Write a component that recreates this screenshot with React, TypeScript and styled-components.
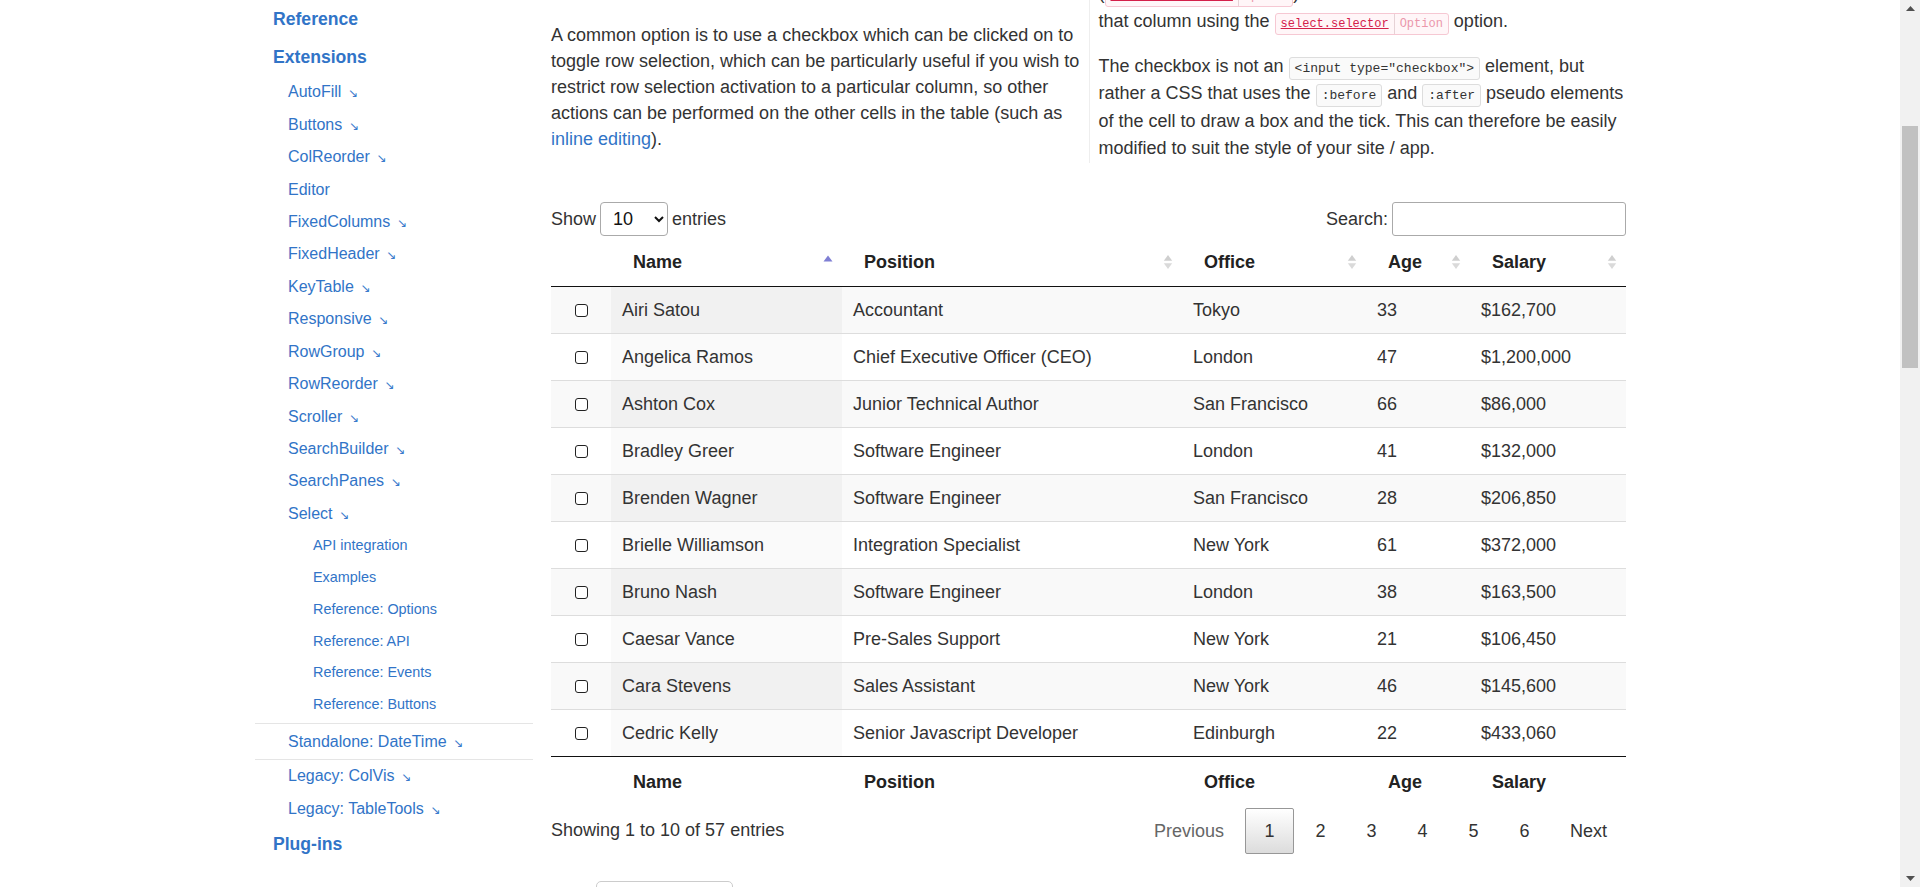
import React from "react";
import styled, { createGlobalStyle, css } from "styled-components";

interface NavItem {
    label: string;
    ext?: boolean;
    boxed?: boolean;
    children?: string[];
}

interface Employee {
    name: string;
    position: string;
    office: string;
    age: number;
    salary: string;
}

const extensions: NavItem[] = [
    { label: "AutoFill", ext: true },
    { label: "Buttons", ext: true },
    { label: "ColReorder", ext: true },
    { label: "Editor" },
    { label: "FixedColumns", ext: true },
    { label: "FixedHeader", ext: true },
    { label: "KeyTable", ext: true },
    { label: "Responsive", ext: true },
    { label: "RowGroup", ext: true },
    { label: "RowReorder", ext: true },
    { label: "Scroller", ext: true },
    { label: "SearchBuilder", ext: true },
    { label: "SearchPanes", ext: true },
    {
        label: "Select",
        ext: true,
        children: [
            "API integration",
            "Examples",
            "Reference: Options",
            "Reference: API",
            "Reference: Events",
            "Reference: Buttons",
        ],
    },
    { label: "Standalone: DateTime", ext: true, boxed: true },
    { label: "Legacy: ColVis", ext: true },
    { label: "Legacy: TableTools", ext: true },
];

const employees: Employee[] = [
    { name: "Airi Satou", position: "Accountant", office: "Tokyo", age: 33, salary: "$162,700" },
    { name: "Angelica Ramos", position: "Chief Executive Officer (CEO)", office: "London", age: 47, salary: "$1,200,000" },
    { name: "Ashton Cox", position: "Junior Technical Author", office: "San Francisco", age: 66, salary: "$86,000" },
    { name: "Bradley Greer", position: "Software Engineer", office: "London", age: 41, salary: "$132,000" },
    { name: "Brenden Wagner", position: "Software Engineer", office: "San Francisco", age: 28, salary: "$206,850" },
    { name: "Brielle Williamson", position: "Integration Specialist", office: "New York", age: 61, salary: "$372,000" },
    { name: "Bruno Nash", position: "Software Engineer", office: "London", age: 38, salary: "$163,500" },
    { name: "Caesar Vance", position: "Pre-Sales Support", office: "New York", age: 21, salary: "$106,450" },
    { name: "Cara Stevens", position: "Sales Assistant", office: "New York", age: 46, salary: "$145,600" },
    { name: "Cedric Kelly", position: "Senior Javascript Developer", office: "Edinburgh", age: 22, salary: "$433,060" },
];

const columns = [
    { label: "", width: 60, sort: null },
    { label: "Name", width: 231, sort: "asc" },
    { label: "Position", width: 340, sort: "both" },
    { label: "Office", width: 184, sort: "both" },
    { label: "Age", width: 104, sort: "both" },
    { label: "Salary", width: 156, sort: "both" },
] as const;

const GlobalStyle = createGlobalStyle`
    html, body {
        margin: 0;
        padding: 0;
        overflow: hidden;
        background: #fff;
    }
    body {
        font-family: "Liberation Sans", Arial, sans-serif;
        color: #333;
        padding-right: 20px;
    }
    * {
        box-sizing: border-box;
    }
`;

const Layout = styled.div`
    display: flex;
    gap: 18px;
    padding-left: 255px;
    margin-top: -20px;
`;

const Sidebar = styled.nav`
    width: 278px;
    flex: none;
    padding-top: 20.5px;
`;

const NavList = styled.ul`
    list-style: none;
    margin: 0;
    padding: 0;
`;

const SubList = styled(NavList)<{ $nested?: boolean }>`
    ${(p) => p.$nested && css`padding-bottom: 2px;`}
`;

const Heading = styled.a`
    display: block;
    padding: 6.7px 0 6.7px 18px;
    font-size: 17.6px;
    line-height: 24.6px;
    font-weight: bold;
    color: #3174c7;
    text-decoration: none;
`;

const SubLink = styled.a<{ $boxed?: boolean }>`
    display: block;
    padding: 5px 0 5px 33px;
    font-size: 16px;
    line-height: 22.4px;
    color: #3174c7;
    text-decoration: none;
    ${(p) =>
        p.$boxed &&
        css`
            border-top: 1px solid #e5e5e5;
            border-bottom: 1px solid #e5e5e5;
            padding-top: 7px;
            padding-bottom: 6px;
        `}
`;

const SubSubLink = styled.a`
    display: block;
    padding: 5px 0 5px 58px;
    font-size: 14.4px;
    line-height: 21.8px;
    color: #3174c7;
    text-decoration: none;
`;

const Arrow = styled.span`
    font-family: "DejaVu Sans", sans-serif;
    font-size: 12px;
    line-height: 0;
    margin-left: 7px;
    color: #3b7bcc;
`;

const Main = styled.main`
    width: 1075px;
    flex: none;
    font-size: 18px;
`;

const Info = styled.div`
    display: grid;
    grid-template-columns: 537.5px 1fr;
`;

const InfoCol = styled.div<{ $rule?: boolean }>`
    padding-right: 7px;
    line-height: 26px;
    ${(p) =>
        p.$rule &&
        css`
            padding: 0 0 0 9px;
            line-height: 27.5px;
            border-left: 1px solid #eee;
        `}
`;

const Para = styled.p<{ $offset?: number }>`
    margin: ${(p) => p.$offset ?? 0}px 0 17.6px;
    &:last-child {
        margin-bottom: 0;
    }
`;

const Link = styled.a`
    color: #3174c7;
    text-decoration: none;
`;

const Code = styled.code`
    font-family: "Liberation Mono", monospace;
    font-size: 13px;
    line-height: 1;
    padding: 3px 5px;
    border: 1px solid #ddd;
    border-radius: 3px;
    background: #fafafa;
    color: #333;
`;

const OptTag = styled.span`
    display: inline-block;
    font-family: "Liberation Mono", monospace;
    font-size: 12px;
    line-height: 16px;
    border: 1px solid #f6c8d3;
    border-radius: 3px;
    background: #fff6f8;
`;

const OptName = styled.span`
    display: inline-block;
    padding: 2px 5px;
    color: #d4204a;
    text-decoration: underline;
    border-right: 1px solid #e6d2d6;
`;

const OptKind = styled.span`
    display: inline-block;
    padding: 2px 5px;
    color: #eb96ab;
`;

const Controls = styled.div`
    display: flex;
    justify-content: space-between;
    align-items: center;
    margin-top: 39.5px;
    height: 34px;
`;

const ControlLabel = styled.label`
    display: flex;
    align-items: center;
    gap: 4px;
`;

const LengthSelect = styled.select`
    width: 68px;
    height: 34px;
    padding: 0 4px 0 8px;
    font-family: inherit;
    font-size: 18px;
    color: #111;
    background: #fff;
    border: 1px solid #aaa;
    border-radius: 4px;
`;

const SearchInput = styled.input`
    width: 234px;
    height: 34px;
    border: 1px solid #aaa;
    border-radius: 3px;
    font-size: 18px;
`;

const Table = styled.table`
    width: 100%;
    margin-top: 1px;
    table-layout: fixed;
    border-collapse: separate;
    border-spacing: 0;
    font-size: 18px;
`;

const HeadCell = styled.th<{ $foot?: boolean }>`
    padding: 15px 9px 14px 22px;
    line-height: 20px;
    text-align: left;
    font-weight: bold;
    color: #222;
    ${(p) =>
        p.$foot
            ? css`border-top: 1px solid #111;`
            : css`border-bottom: 1px solid #111;`}
`;

const HeadInner = styled.div`
    display: flex;
    align-items: center;
    justify-content: space-between;
`;

const Row = styled.tr<{ $odd: boolean }>`
    background: ${(p) => (p.$odd ? "#f9f9f9" : "#fff")};
    &:not(:first-child) td {
        border-top: 1px solid #ddd;
    }
`;

const Cell = styled.td<{ $sorted?: boolean; $odd?: boolean; $center?: boolean }>`
    padding: 13px 11px;
    line-height: 20px;
    white-space: nowrap;
    ${(p) => p.$center && css`text-align: center;`}
    ${(p) => p.$sorted && css`background: ${p.$odd ? "#f1f1f1" : "#fafafa"};`}
`;

const Check = styled.input`
    appearance: none;
    display: block;
    margin: 0 auto;
    width: 13px;
    height: 13px;
    border: 1px solid #222;
    border-radius: 3px;
    background: #fff;
`;

const Bottom = styled.div`
    display: flex;
    justify-content: space-between;
    align-items: center;
    margin-top: 1.5px;
`;

const Pager = styled.div`
    display: flex;
    gap: 2px;
`;

const PageButton = styled.a<{ $current?: boolean; $disabled?: boolean }>`
    display: block;
    min-width: 49px;
    padding: 9px 18px;
    line-height: 26px;
    text-align: center;
    font-size: 18px;
    color: ${(p) => (p.$disabled ? "#666" : "#333")};
    border: 1px solid transparent;
    border-radius: 2px;
    ${(p) =>
        p.$current &&
        css`
            border-color: #979797;
            background: linear-gradient(to bottom, #fff 0%, #dcdcdc 100%);
        `}
`;

const TabBar = styled.div`
    display: flex;
    margin-top: 27px;
    padding-left: 45px;
`;

const Tab = styled.div<{ $active?: boolean }>`
    width: 137px;
    height: 44px;
    line-height: 44px;
    text-align: center;
    border: 1px solid ${(p) => (p.$active ? "#ccc" : "transparent")};
    border-radius: 5px;
`;

const ScrollTrack = styled.div`
    position: fixed;
    top: 0;
    right: 0;
    width: 20px;
    height: 100vh;
    background: #f1f1f1;
`;

const ScrollThumb = styled.div`
    position: absolute;
    top: 126px;
    left: 2px;
    right: 2px;
    height: 242px;
    background: #c1c1c1;
`;

const ScrollButton = styled.div<{ $down?: boolean }>`
    position: absolute;
    left: 0;
    right: 0;
    height: 17px;
    display: flex;
    align-items: center;
    justify-content: center;
    ${(p) => (p.$down ? css`bottom: 0;` : css`top: 0;`)}
`;

const SortIcon = ({ kind }: { kind: "asc" | "both" }) => (
    <svg width="10" height="20" viewBox="0 0 10 20" aria-hidden>
        {kind === "asc" ? (
            <path d="M0.5 9.5 L5 3.5 L9.5 9.5 Z" fill="#7f7fd4" />
        ) : (
            <>
                <path d="M0.8 8.8 L5 3 L9.2 8.8 Z" fill="#cfcfcf" />
                <path d="M0.8 11.2 L5 17 L9.2 11.2 Z" fill="#dadada" />
            </>
        )}
    </svg>
);

const ScrollArrow = ({ down }: { down?: boolean }) => (
    <svg width="9" height="5" viewBox="0 0 9 5">
        <path d={down ? "M0 0 L9 0 L4.5 5 Z" : "M0 5 L9 5 L4.5 0 Z"} fill="#505050" />
    </svg>
);

const Opt = ({ name }: { name: string }) => (
    <OptTag>
        <OptName>{name}</OptName>
        <OptKind>Option</OptKind>
    </OptTag>
);

const Navigation = () => (
    <Sidebar>
        <NavList>
            <li>
                <Heading href="#">Reference</Heading>
            </li>
            <li>
                <Heading href="#">Extensions</Heading>
                <SubList>
                    {extensions.map((item) => (
                        <li key={item.label}>
                            <SubLink href="#" $boxed={item.boxed}>
                                {item.label}
                                {item.ext && <Arrow>↘</Arrow>}
                            </SubLink>
                            {item.children && (
                                <SubList $nested>
                                    {item.children.map((child) => (
                                        <li key={child}>
                                            <SubSubLink href="#">{child}</SubSubLink>
                                        </li>
                                    ))}
                                </SubList>
                            )}
                        </li>
                    ))}
                </SubList>
            </li>
            <li>
                <Heading href="#">Plug-ins</Heading>
            </li>
        </NavList>
    </Sidebar>
);

const HeadRow = ({ foot }: { foot?: boolean }) => (
    <tr>
        {columns.map((col, i) => (
            <HeadCell key={i} $foot={foot}>
                <HeadInner>
                    <span>{col.label}</span>
                    {!foot && col.sort && <SortIcon kind={col.sort} />}
                </HeadInner>
            </HeadCell>
        ))}
    </tr>
);

const App = () => {
    return (
        <>
            <GlobalStyle />
            <Layout>
                <Navigation />
                <Main>
                    <Info>
                        <InfoCol>
                            <Para $offset={42}>
                                A common option is to use a checkbox which can be clicked on to toggle row
                                selection, which can be particularly useful if you wish to restrict row
                                selection activation to a particular column, so other actions can be performed
                                on the other cells in the table (such as <Link href="#">inline editing</Link>).
                            </Para>
                        </InfoCol>
                        <InfoCol $rule>
                            <Para>
                                (<Opt name="columns.className" />) and row selection is restricted to
                                <br />
                                that column using the <Opt name="select.selector" /> option.
                            </Para>
                            <Para>
                                The checkbox is not an <Code>&lt;input type="checkbox"&gt;</Code> element, but
                                rather a CSS that uses the <Code>:before</Code> and <Code>:after</Code> pseudo
                                elements of the cell to draw a box and the tick. This can therefore be easily
                                modified to suit the style of your site / app.
                            </Para>
                        </InfoCol>
                    </Info>

                    <Controls>
                        <ControlLabel>
                            Show
                            <LengthSelect defaultValue="10">
                                <option value="10">10</option>
                                <option value="25">25</option>
                                <option value="50">50</option>
                                <option value="100">100</option>
                            </LengthSelect>
                            entries
                        </ControlLabel>
                        <ControlLabel>
                            Search:
                            <SearchInput type="search" />
                        </ControlLabel>
                    </Controls>

                    <Table>
                        <colgroup>
                            {columns.map((col, i) => (
                                <col key={i} style={{ width: col.width }} />
                            ))}
                        </colgroup>
                        <thead>
                            <HeadRow />
                        </thead>
                        <tbody>
                            {employees.map((e, i) => {
                                const odd = i % 2 === 0;
                                return (
                                    <Row key={e.name} $odd={odd}>
                                        <Cell $center>
                                            <Check type="checkbox" aria-label={`Select ${e.name}`} />
                                        </Cell>
                                        <Cell $sorted $odd={odd}>
                                            {e.name}
                                        </Cell>
                                        <Cell>{e.position}</Cell>
                                        <Cell>{e.office}</Cell>
                                        <Cell>{e.age}</Cell>
                                        <Cell>{e.salary}</Cell>
                                    </Row>
                                );
                            })}
                        </tbody>
                        <tfoot>
                            <HeadRow foot />
                        </tfoot>
                    </Table>

                    <Bottom>
                        <div>Showing 1 to 10 of 57 entries</div>
                        <Pager>
                            <PageButton $disabled>Previous</PageButton>
                            {[1, 2, 3, 4, 5, 6].map((n) => (
                                <PageButton key={n} $current={n === 1}>
                                    {n}
                                </PageButton>
                            ))}
                            <PageButton>Next</PageButton>
                        </Pager>
                    </Bottom>

                    <TabBar>
                        <Tab $active>Javascript</Tab>
                        <Tab>HTML</Tab>
                        <Tab>CSS</Tab>
                        <Tab>Ajax</Tab>
                    </TabBar>
                </Main>
            </Layout>
            <ScrollTrack>
                <ScrollButton>
                    <ScrollArrow />
                </ScrollButton>
                <ScrollThumb />
                <ScrollButton $down>
                    <ScrollArrow down />
                </ScrollButton>
            </ScrollTrack>
        </>
    );
};

export default App;
